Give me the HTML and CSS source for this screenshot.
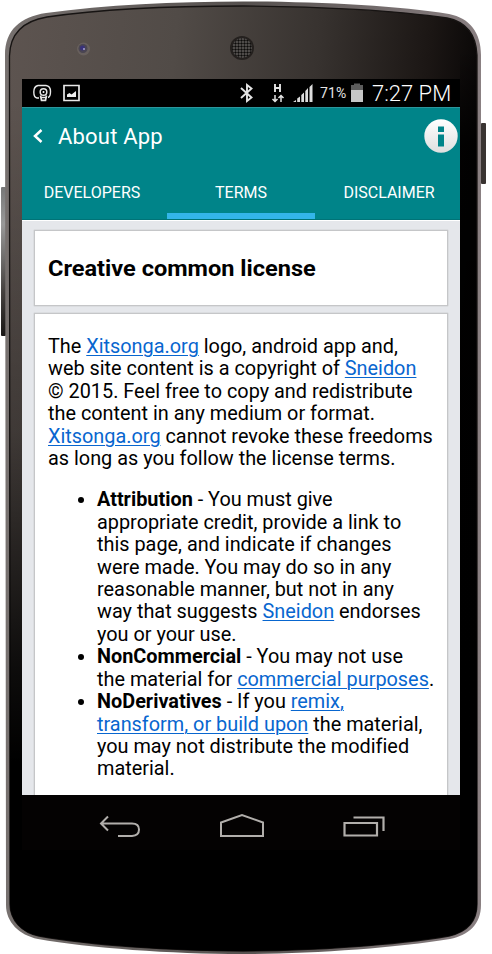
FILE: index.html
```html
<!DOCTYPE html>
<html lang="en">
<head>
<meta charset="utf-8">
<title>About App</title>
<link rel="stylesheet" href="styles.css">
</head>
<body>
<div class="phone">
  <svg class="shell" width="492" height="954" viewBox="0 0 492 954" aria-hidden="true">
    <defs>
      <linearGradient id="face" x1="0" y1="0" x2="1" y2="0.18">
        <stop offset="0" stop-color="#5d5450"/><stop offset=".35" stop-color="#514b47"/><stop offset=".65" stop-color="#37322f"/><stop offset=".88" stop-color="#1b1614"/><stop offset="1" stop-color="#070505"/>
      </linearGradient>
      <linearGradient id="fade" x1="0" y1="0" x2="0" y2="1">
        <stop offset=".1" stop-color="#000" stop-opacity="0"/><stop offset=".45" stop-color="#000" stop-opacity=".3"/><stop offset=".7" stop-color="#000" stop-opacity=".85"/><stop offset=".8" stop-color="#000"/>
      </linearGradient>
      <linearGradient id="side" x1="0" y1="0" x2="0" y2="1">
        <stop offset="0" stop-color="#000" stop-opacity="0"/><stop offset=".12" stop-color="#000" stop-opacity=".85"/><stop offset="1" stop-color="#000"/>
      </linearGradient>
      <linearGradient id="rim" x1="0" y1="0" x2="1" y2="0">
        <stop offset="0" stop-color="#77716f"/><stop offset=".5" stop-color="#55504e"/><stop offset="1" stop-color="#8a8082"/>
      </linearGradient>
      <linearGradient id="button" x1="0" y1="0" x2="0" y2="1">
        <stop offset="0" stop-color="#777"/><stop offset=".25" stop-color="#999"/><stop offset=".7" stop-color="#45413f"/><stop offset="1" stop-color="#191716"/>
      </linearGradient>
      <pattern id="mesh" width="3" height="3" patternUnits="userSpaceOnUse"><rect width="3" height="3" fill="#64605d"/><circle cx="1.5" cy="1.5" r="1.200" fill="#0d0c0b"/></pattern>
    </defs>
    <rect x="1" y="187" width="5" height="149" rx="1" fill="url(#button)"/>
    <rect x="481" y="123" width="5" height="61" rx="1" fill="#393331"/>
    <path d="M5 55C5 30 20 17 46 13C105 5 175 1.500 243 1.500C320 1.500 399 6 449 14C470 18 481 33 481 55V905C481 924 469 935 450 939C396 948 310 954 243 954C170 954 90 948 38 939C19 935 6 922 6 905Z" fill="url(#rim)"/>
    <path d="M9.500 56C10 33 23 21 47 17C105 8.500 175 6 243 6C320 6 399 11 447 18C467 22 476 35 477 55V904C477 921 467 932 449 936C396 945 310 951 243 951C170 951 90 945 39 936C22 933 10 920 10 904Z" fill="url(#face)" stroke="#171413" stroke-width="1.300"/>
    <path d="M9.500 56C10 33 23 21 47 17C105 8.500 175 6 243 6C320 6 399 11 447 18C467 22 476 35 477 55V904C477 921 467 932 449 936C396 945 310 951 243 951C170 951 90 945 39 936C22 933 10 920 10 904Z" fill="url(#fade)"/>
    <path d="M460 50h16v790h-16z" fill="url(#side)"/>
    <circle cx="83.500" cy="49" r="6.500" fill="#68605d"/><circle cx="83" cy="48.500" r="4.500" fill="#4a4552"/><circle cx="82.500" cy="48" r="2.500" fill="#39327a"/><circle cx="84" cy="49" r="1" fill="#aaa5d0"/>
    <circle cx="242" cy="48" r="12" fill="#24201e"/><circle cx="242" cy="48" r="10" fill="url(#mesh)"/>
  </svg>
  <main class="screen">
    <div class="status">
      <svg class="notify" width="41" height="28" viewBox="0 0 41 28" fill="none" stroke="#e8e8e8">
        <path d="M17 19H15Q11.800 18.500 11.800 13T16 6.500H24Q28.500 7 28.500 12.500T26 18.500" stroke-width="1.400"/>
        <circle cx="21.500" cy="13" r="3.300" stroke-width="1.500"/><circle cx="21.500" cy="13" r="1" fill="#fff" stroke="none"/><path d="M18.500 16.500L19.500 21.300H23.500L24.500 16.500M19 18.500H24" stroke-width="1.700"/>
      </svg>
      <svg class="picture" width="17" height="28" viewBox="0 0 17 28"><path d="M1 6.500H16V21.500H1Z" fill="none" stroke="#e8e8e8" stroke-width="1.700"/><path d="M4 18V15.500L6.500 14L8.500 15.500L13 12V18Z" fill="#eee"/></svg>
      <svg class="signals" width="75" height="28" viewBox="0 0 75 28" fill="none" stroke="#e4e4e4">
        <path d="M1 9L11.500 18.500L7 22V6L11.500 9.500L1 19" stroke-width="1.900"/>
        <path d="M35 5V13M40 5V13M35 9H40" stroke-width="1.900"/>
        <path d="M35 16V22M32.500 20L35 22.500L37.500 20M41 23V17M38.500 19L41 16.500L43.500 19" stroke-width="1.500"/>
        <path d="M53 23L56 21V23ZM57.200 19.500L60 17.500V23H57.200ZM61.300 16L64 13.500V23H61.300ZM65.300 12L68 9V23H65.300ZM69.500 8L72.500 5V23H69.500Z" fill="#ddd" stroke="none"/>
      </svg>
      <span class="percent">71%</span>
      <svg class="battery" width="14" height="28" viewBox="0 0 14 28"><path d="M1 6H4V4.500H10V6H13V11H1Z" fill="#5c5c5c"/><path d="M1 11H13V23H1Z" fill="#c7c7c7"/></svg>
      <span class="time">7:27 PM</span>
    </div>
    <header class="appbar">
      <svg class="back" width="12" height="16" viewBox="0 0 12 16"><path d="M9.500 2L3 8L9.500 14" fill="none" stroke="#fff" stroke-width="2.500"/></svg>
      <h1>About App</h1>
      <svg class="info" width="34" height="34" viewBox="0 0 34 34"><defs><linearGradient id="pearl" x2="0" y2="1"><stop stop-color="#fff"/><stop offset="1" stop-color="#dfdfdf"/></linearGradient></defs><circle cx="17" cy="17" r="16.700" fill="url(#pearl)"/><path d="M14 7.500h6v5.500h-6zM14 15.500h6v12h-6z" fill="#008489"/></svg>
    </header>
    <nav class="tabs"><span>DEVELOPERS</span><span class="active">TERMS</span><span>DISCLAIMER</span></nav>
    <div class="content">
      <section class="card heading"><h2>Creative common license</h2></section>
      <section class="card body">
        <p><span class="line">The <a>Xitsonga.org</a> logo, android app and,</span><span class="line">web site content is a copyright of <a>Sneidon</a></span><span class="line">© 2015. Feel free to copy and redistribute</span><span class="line">the content in any medium or format.</span><span class="line"><a>Xitsonga.org</a> cannot revoke these freedoms</span><span class="line">as long as you follow the license terms.</span></p>
        <ul>
          <li><span class="line"><b>Attribution</b> - You must give</span><span class="line">appropriate credit, provide a link to</span><span class="line">this page, and indicate if changes</span><span class="line">were made. You may do so in any</span><span class="line">reasonable manner, but not in any</span><span class="line">way that suggests <a>Sneidon</a> endorses</span><span class="line">you or your use.</span></li>
          <li><span class="line"><b>NonCommercial</b> - You may not use</span><span class="line">the material for <a>commercial purposes</a>.</span></li>
          <li><span class="line"><b>NoDerivatives</b> - If you <a>remix,</a></span><span class="line"><a>transform, or build upon</a> the material,</span><span class="line">you may not distribute the modified</span><span class="line">material.</span></li>
        </ul>
      </section>
    </div>
    <footer class="nav">
      <svg width="42" height="26" viewBox="0 0 42 26"><path d="M9 3.500L2 10.500L9 17.500M3 10.500H33Q40 10.500 40 16.500T33 23H19" fill="none" stroke="#b1aeab" stroke-width="2"/></svg>
      <svg width="46" height="26" viewBox="0 0 46 26"><path d="M2 23V9.500L23 2L44 9.500V23Z" fill="none" stroke="#b1aeab" stroke-width="2"/></svg>
      <svg width="42" height="26" viewBox="0 0 42 26"><path d="M1.500 10H34V22.500H1.500ZM10.500 4.500H40.500V18" fill="none" stroke="#b1aeab" stroke-width="2.200"/></svg>
    </footer>
  </main>
</div>
</body>
</html>
```
FILE: styles.css
```css
* { box-sizing: border-box; }
body { margin: 0; background: #fff; font-family: Roboto, sans-serif; font-variant-ligatures: none; }
.phone { position: relative; width: 492px; height: 954px; padding: 79px 0 0 22px; overflow: hidden; }
.shell { position: absolute; inset: 0; }
.screen { position: relative; width: 438px; }
.status { display: flex; height: 28px; background: #000; color: #e5e5e5; }
.status svg { flex: none; }
.signals { margin-left: 160px; }
.percent { width: 28px; margin-left: 5px; font-size: 14px; line-height: 29px; letter-spacing: .1px; }
.battery { margin-left: 2px; }
.time { margin-left: 8px; color: #fff; font-size: 22px; font-weight: 300; line-height: 30px; white-space: nowrap; }
.appbar { display: flex; align-items: center; height: 59px; background: #008489; border-top: 1px solid #2c969c; color: #fff; }
.back { margin: -2px 0 0 10px; }
.appbar h1 { margin: 0 0 0 14px; font-size: 22px; font-weight: 400; line-height: 28px; letter-spacing: .2px; }
.info { margin: -3px 2px 0 auto; }
.tabs { display: grid; grid-template-columns: 145px 148px 145px; height: 54px; background: #008489; border-bottom: 1px solid #007377; color: #fff; font-size: 16px; line-height: 53px; text-align: center; }
.tabs span:first-child { padding-right: 5px; }
.tabs span:last-child { padding-left: 3px; }
.tabs .active { box-shadow: inset 0 -6px #33b5e9; }
.content { height: 575px; padding: 9px 12px 0; overflow: hidden; background: #e5e7eb; border-top: 1px solid #fff; }
.card { background: #fff; border: 1px solid #c5c6c8; box-shadow: 0 0 1px #aaa; }
.heading { height: 76px; padding: 22px 13px; }
.heading h2 { width: max-content; margin: 0; font-size: 22px; line-height: 31px; white-space: nowrap; transform: scaleX(1.07); transform-origin: left; }
.body { height: 520px; margin-top: 7px; padding: 22px 13px 0; font-size: 19.860px; line-height: 22.400px; }
.body p { margin: 0 0 19px; }
.line { display: block; width: max-content; white-space: nowrap; }
.body a { color: #0866cf; text-decoration: underline; text-decoration-thickness: 1px; text-underline-offset: 2px; }
.body ul { margin: 0; padding-left: 49px; }
.nav { display: flex; height: 55px; padding: 18px 75px 0 77px; justify-content: space-between; background: #040202; }
```
